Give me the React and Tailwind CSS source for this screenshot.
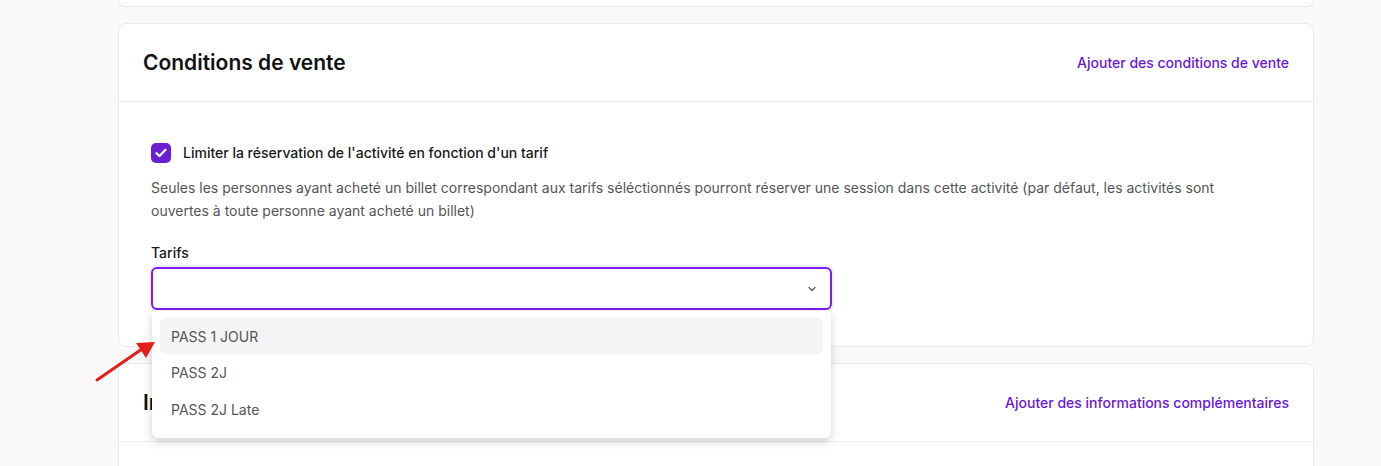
import React from "react";

function Check() {
  return (
    <svg width="12" height="10" viewBox="0 0 12 10" fill="none">
      <path d="M1.5 5.2 L4.5 8 L10.5 1.8" stroke="white" strokeWidth="2.2" strokeLinecap="round" strokeLinejoin="round" />
    </svg>
  );
}

export default function App() {
  return (
    <div className="relative h-[466px] bg-[#f9f9f9] overflow-hidden" style={{ fontFamily: "Inter, 'Noto Sans', sans-serif" }}>
      <div className="ml-[118px] w-[1196px] flex flex-col gap-4">
        <div className="h-[7px] bg-white border-x border-b border-[#e9e9e9] rounded-b-lg"></div>

        <div className="bg-white border border-[#e9e9e9] rounded-lg">
          <div className="h-[78px] px-6 flex items-center justify-between border-b border-[#ebebeb]">
            <h2 className="text-[21px] font-semibold text-[#111]">Conditions de vente</h2>
            <a className="text-[14px] font-medium text-[#6a17d6]">Ajouter des conditions de vente</a>
          </div>
          <div className="pl-8 pr-16 pt-10 pb-[36px]">
            <div className="flex items-center gap-3">
              <span className="w-5 h-5 rounded-[5px] bg-[#6b1fd2] flex items-center justify-center"><Check /></span>
              <span className="text-[14px] font-medium text-[#1a1a1a]">Limiter la réservation de l'activité en fonction d'un tarif</span>
            </div>
            <p className="mt-[13px] text-[14px] leading-[23px] text-[#555]">
              Seules les personnes ayant acheté un billet correspondant aux tarifs séléctionnés pourront réserver une session dans cette activité (par défaut, les activités sont ouvertes à toute personne ayant acheté un billet)
            </p>
            <div className="mt-[21px] text-[14px] font-medium text-[#1a1a1a] leading-[20px]">Tarifs</div>
            <div className="relative mt-[4px] w-[681px]">
              <div className="h-[43px] rounded-md border-2 border-[#7c1cf0] bg-white flex items-center justify-end pr-3 ring-2 ring-[#f0f0f0]">
                <svg width="12" height="12" viewBox="0 0 24 24" fill="none" stroke="#555" strokeWidth="2.5" strokeLinecap="round" strokeLinejoin="round">
                  <path d="M6 9l6 6 6-6" />
                </svg>
              </div>
              <div className="absolute z-10 left-px top-[43px] w-[679px] bg-white rounded-b-md shadow-[0_4px_10px_rgba(0,0,0,0.18)] border-t border-[#eee] px-2 pt-[7px] pb-[10px]">
                <div className="h-[36px] px-[11px] flex items-center rounded-md bg-[#f4f4f4] text-[14px] text-[#555]">PASS 1 JOUR</div>
                <div className="h-[37px] px-[11px] flex items-center text-[14px] text-[#555]">PASS 2J</div>
                <div className="h-[37px] px-[11px] flex items-center text-[14px] text-[#555]">PASS 2J Late</div>
              </div>
            </div>
          </div>
        </div>

        <div className="bg-white border border-[#e9e9e9] rounded-lg h-[200px]">
          <div className="h-[78px] px-6 flex items-center justify-between border-b border-[#ebebeb]">
            <h2 className="text-[21px] font-semibold text-[#111]">Informations complémentaires</h2>
            <a className="text-[14px] font-medium text-[#6a17d6]">Ajouter des informations complémentaires</a>
          </div>
        </div>
      </div>

      <svg className="absolute left-[92px] top-[336px] z-20" width="70" height="50" viewBox="0 0 70 50">
        <line x1="5" y1="44" x2="50" y2="13" stroke="#e51c1c" strokeWidth="3" strokeLinecap="round" />
        <polygon points="63,6 44,7 54,22" fill="#e51c1c" />
      </svg>
    </div>
  );
}
